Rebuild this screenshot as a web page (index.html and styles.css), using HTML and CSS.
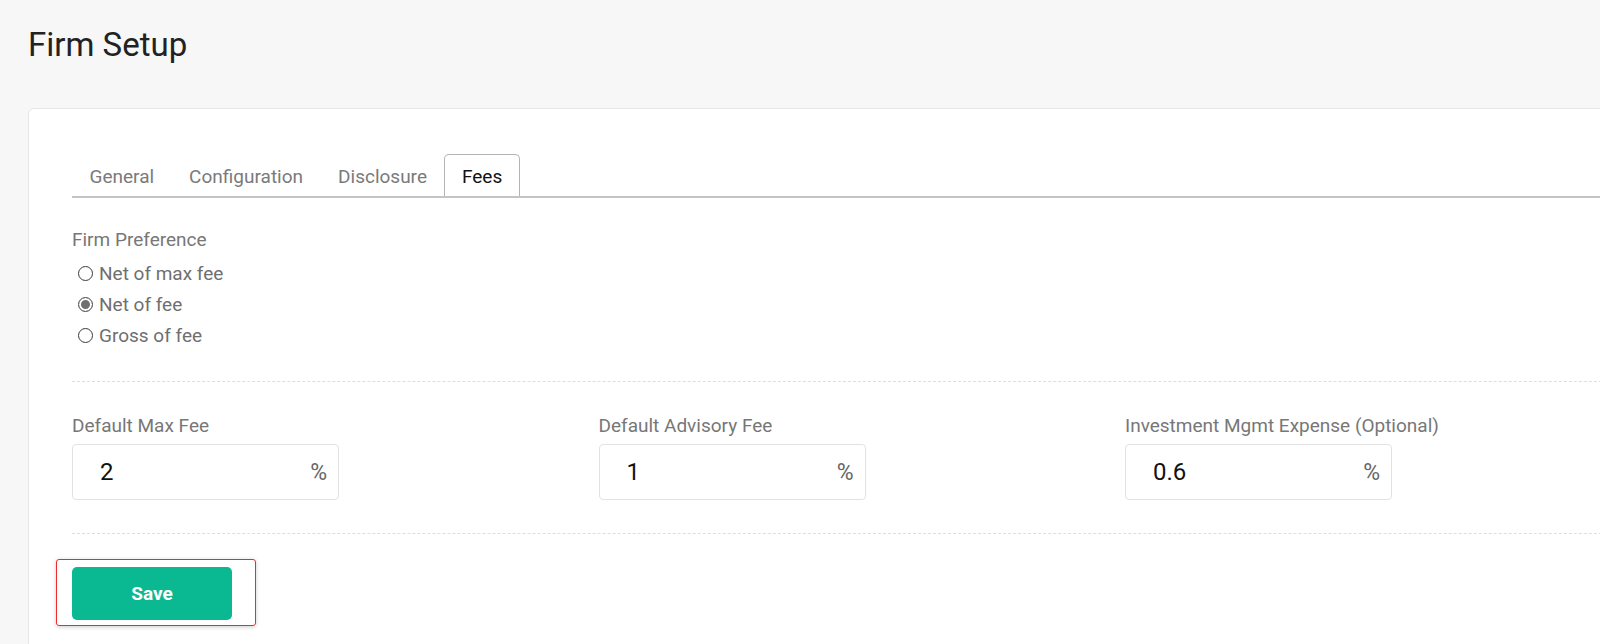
FILE: index.html
```html
<!DOCTYPE html>
<html>
<head>
    <meta charset='utf-8'>
    <title>Firm Setup</title>
    <meta name='viewport' content='width=device-width, initial-scale=1'>
    <link rel="stylesheet" href="styles.css">
</head>
<body>
    <div class="page">
        <h1 class="pageTitle">Firm Setup</h1>

        <div class="card">
            <div class="tabs">
                <div class="tab">General</div>
                <div class="tab">Configuration</div>
                <div class="tab">Disclosure</div>
                <div class="tab active">Fees</div>
            </div>

            <div class="prefLabel">Firm Preference</div>
            <label class="radioRow"><input type="radio" name="pref"> Net of max fee</label>
            <label class="radioRow"><input type="radio" name="pref" checked> Net of fee</label>
            <label class="radioRow"><input type="radio" name="pref"> Gross of fee</label>

            <div class="divider"></div>

            <div class="feeGrid">
                <div class="feeField">
                    <div class="fieldLabel">Default Max Fee</div>
                    <div class="feeBox">
                        <input class="feeInput" type="text" value="2">
                        <span class="pct">%</span>
                    </div>
                </div>
                <div class="feeField">
                    <div class="fieldLabel">Default Advisory Fee</div>
                    <div class="feeBox">
                        <input class="feeInput" type="text" value="1">
                        <span class="pct">%</span>
                    </div>
                </div>
                <div class="feeField">
                    <div class="fieldLabel">Investment Mgmt Expense (Optional)</div>
                    <div class="feeBox">
                        <input class="feeInput" type="text" value="0.6">
                        <span class="pct">%</span>
                    </div>
                </div>
            </div>

            <div class="divider second"></div>

            <div class="saveHighlight">
                <button class="saveBtn">Save</button>
            </div>
        </div>
    </div>
</body>
</html>
```

FILE: styles.css
```css
/* Page */
html, body {
    margin: 0;
    overflow: hidden;
    background: #f7f7f7;
    font-family: Roboto, "Liberation Sans", sans-serif;
}

.page {
    padding-left: 28px;
}

.pageTitle {
    margin: 0 0 43px 0;
    padding-top: 25px;
    font-size: 33px;
    line-height: 40px;
    font-weight: 400;
    color: #222;
}

/* Card */
.card {
    width: 1640px;
    background: #fff;
    border: 1px solid #e6e6e6;
    border-radius: 6px;
    padding: 45px 0 60px 43px;
}

/* Tabs */
.tabs {
    display: flex;
    border-bottom: 2px solid #c4c4c4;
}

.tab {
    font-size: 19px;
    line-height: 22px;
    color: #7a7a7a;
    padding: 11px 16.5px 8px 16.5px;
    border: 1px solid transparent;
    border-bottom: none;
    border-radius: 5px 5px 0 0;
}

.tab.active {
    color: #111;
    border-color: #b4b4b4;
}

/* Firm preference */
.prefLabel {
    margin-top: 31px;
    font-size: 19px;
    line-height: 22px;
    color: #777;
}

.radioRow {
    display: flex;
    align-items: center;
    height: 31px;
    font-size: 19px;
    color: #6f6f6f;
}

.prefLabel + .radioRow {
    margin-top: 7px;
}

.radioRow input {
    appearance: none;
    width: 15px;
    height: 15px;
    margin: 0 6px 0 6px;
    border: 1px solid #3a3a3a;
    border-radius: 50%;
    background: #fff;
}

.radioRow input:checked {
    border-color: #4a4a4a;
    box-shadow: inset 0 0 0 2px #fff, inset 0 0 0 7px #707070;
}

.divider {
    margin-top: 30px;
    border-top: 1px dashed #dedede;
}

/* Fees */
.feeGrid {
    display: grid;
    grid-template-columns: repeat(3, 526.5px);
    margin-top: 33px;
}

.fieldLabel {
    font-size: 19px;
    line-height: 22px;
    color: #777;
    margin-bottom: 7px;
}

.feeBox {
    display: flex;
    align-items: center;
    width: 265px;
    height: 54px;
    border: 1px solid #e2e2e2;
    border-radius: 4px;
    background: #fff;
}

.feeInput {
    flex: 1;
    min-width: 0;
    border: none;
    outline: none;
    padding: 0 0 0 27px;
    font-family: Roboto, "Liberation Sans", sans-serif;
    font-size: 24px;
    color: #111;
    background: transparent;
}

.pct {
    padding-right: 11px;
    font-size: 23px;
    color: #666;
}

.divider.second {
    margin-top: 33px;
}

/* Save */
.saveHighlight {
    display: inline-block;
    margin: 25px 0 0 -16px;
    padding: 7px 23px 5px 15px;
    border: 1px solid #ee2b2b;
    border-radius: 3px;
    box-shadow: 0 1px 4px rgba(0, 0, 0, 0.2);
}

.saveBtn {
    display: block;
    width: 160px;
    height: 53px;
    border: none;
    border-radius: 5px;
    background: #0ab891;
    color: #fff;
    font-family: Roboto, "Liberation Sans", sans-serif;
    font-size: 19px;
    font-weight: 700;
}
```
